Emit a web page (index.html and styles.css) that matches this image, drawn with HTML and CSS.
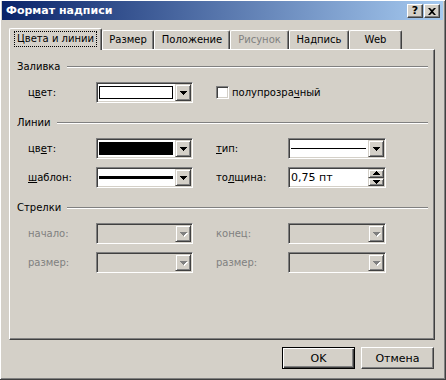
FILE: index.html
```html
<!DOCTYPE html>
<html lang="ru">
<head>
  <meta charset="UTF-8">
  <title>Формат надписи</title>
  <link rel="stylesheet" href="styles.css">
</head>
<body>
  <svg class="defs" width="0" height="0">
    <symbol id="down" viewBox="0 0 7 4"><path d="M0 0h7v1H0zM1 1h5v1H1zM2 2h3v1H2zM3 3h1v1H3z"/></symbol>
    <symbol id="up" viewBox="0 0 7 4"><path d="M3 0h1v1H3zM2 1h3v1H2zM1 2h5v1H1zM0 3h7v1H0z"/></symbol>
  </svg>

  <div class="window">
    <div class="titlebar">
      <span class="title">Формат надписи</span>
      <div class="caption-buttons">
        <span class="caption-btn help">?</span>
        <span class="caption-btn">
          <svg width="8" height="7" viewBox="0 0 8 7"><path d="M0 0h2l2 2 2-2h2L5 3.5 8 7H6L4 5 2 7H0l3-3.5z"/></svg>
        </span>
      </div>
    </div>

    <div class="client">
      <div class="tabs">
        <div class="tab active"><span class="focus">Цвета и линии</span></div>
        <div class="tab tab-size">Размер</div>
        <div class="tab tab-pos">Положение</div>
        <div class="tab tab-pic disabled">Рисунок</div>
        <div class="tab tab-box">Надпись</div>
        <div class="tab tab-web">Web</div>
      </div>

      <div class="panel">
        <div class="group-title"><span>Заливка</span><i class="etch"></i></div>
        <div class="row">
          <span class="lbl">ц<u>в</u>ет:</span>
          <div class="combo">
            <div class="field"><span class="swatch"></span></div>
            <span class="drop"><svg class="arr"><use href="#down"/></svg></span>
          </div>
          <label class="check">
            <span class="box"></span>
            полупрозра<u>ч</u>ный
          </label>
        </div>

        <div class="group-title"><span>Линии</span><i class="etch"></i></div>
        <div class="row">
          <span class="lbl">цв<u>е</u>т:</span>
          <div class="combo">
            <div class="field"><span class="swatch black"></span></div>
            <span class="drop"><svg class="arr"><use href="#down"/></svg></span>
          </div>
          <span class="lbl right"><u>т</u>ип:</span>
          <div class="combo wide">
            <div class="field"><span class="line thin"></span></div>
            <span class="drop"><svg class="arr"><use href="#down"/></svg></span>
          </div>
        </div>
        <div class="row">
          <span class="lbl"><u>ш</u>аблон:</span>
          <div class="combo">
            <div class="field"><span class="line thick"></span></div>
            <span class="drop"><svg class="arr"><use href="#down"/></svg></span>
          </div>
          <span class="lbl right">то<u>л</u>щина:</span>
          <div class="combo wide spin">
            <div class="field text">0,75 пт</div>
            <div class="spin-btns">
              <span class="drop"><svg class="arr"><use href="#up"/></svg></span>
              <span class="drop"><svg class="arr"><use href="#down"/></svg></span>
            </div>
          </div>
        </div>

        <div class="group-title"><span>Стрелки</span><i class="etch"></i></div>
        <div class="row disabled">
          <span class="lbl">начало:</span>
          <div class="combo">
            <div class="field"></div>
            <span class="drop"><svg class="arr"><use href="#down"/></svg></span>
          </div>
          <span class="lbl right">конец:</span>
          <div class="combo wide">
            <div class="field"></div>
            <span class="drop"><svg class="arr"><use href="#down"/></svg></span>
          </div>
        </div>
        <div class="row disabled">
          <span class="lbl">размер:</span>
          <div class="combo">
            <div class="field"></div>
            <span class="drop"><svg class="arr"><use href="#down"/></svg></span>
          </div>
          <span class="lbl right">размер:</span>
          <div class="combo wide">
            <div class="field"></div>
            <span class="drop"><svg class="arr"><use href="#down"/></svg></span>
          </div>
        </div>
      </div>

      <div class="dialog-buttons">
        <button class="btn default">OK</button>
        <button class="btn">Отмена</button>
      </div>
    </div>
  </div>
</body>
</html>
```

FILE: styles.css
```css
body {
  margin: 0;
  background: #d4d0c8;
  font-family: "DejaVu Sans", Verdana, sans-serif;
  font-size: 10px;
  color: #000;
}
.defs {
  position: absolute;
}
.window {
  width: 446px;
  height: 380px;
  box-sizing: border-box;
  padding: 1px 3px 3px 2px;
  display: flex;
  flex-direction: column;
  box-shadow: inset -1px -1px #404040, inset 1px 1px #fff, inset -2px -2px #808080;
}

/* title bar */
.titlebar {
  height: 19px;
  display: flex;
  align-items: center;
  justify-content: space-between;
  padding: 0 3px 0 4px;
  background: linear-gradient(to right, #0a246a, #a6caf0);
}
.title {
  color: #fff;
  font-weight: bold;
  font-size: 11px;
}
.caption-buttons {
  display: flex;
  gap: 1px;
  margin-top: 1px;
}
.caption-btn {
  width: 16px;
  height: 14px;
  box-sizing: border-box;
  display: flex;
  align-items: center;
  justify-content: center;
  background: #d4d0c8;
  border: 1px solid;
  border-color: #fff #404040 #404040 #fff;
  box-shadow: inset -1px -1px #808080;
}
.caption-btn.help {
  font-weight: bold;
  font-size: 11px;
  line-height: 12px;
}

/* client area */
.client {
  flex: 1;
  padding: 8px 8px 0 7px;
}
.tabs {
  display: flex;
  align-items: flex-end;
  height: 21px;
}
.tab {
  height: 19px;
  box-sizing: border-box;
  border: 1px solid;
  border-bottom: none;
  border-color: #fff #404040 #fff #fff;
  border-radius: 2px 2px 0 0;
  box-shadow: inset -1px 0 #808080;
  text-align: center;
  line-height: 17px;
}
.tab.active {
  width: 93px;
  height: 22px;
  margin-bottom: -1px;
  position: relative;
  z-index: 1;
  background: #d4d0c8;
  padding-top: 3px;
  line-height: 14px;
}
.tab.active .focus {
  display: inline-block;
  padding: 0 2px;
  outline: 1px dotted #000;
}
.tab-size { width: 52px; }
.tab-pos { width: 76px; }
.tab-pic { width: 59px; }
.tab-box { width: 60px; }
.tab-web { width: 53px; }
.tab.disabled {
  color: #808080;
}

.panel {
  height: 291px;
  box-sizing: border-box;
  border: 1px solid;
  border-color: #fff #404040 #404040 #fff;
  box-shadow: inset -1px -1px #808080;
  padding: 10px 6px 0 7px;
}

.group-title {
  display: flex;
  align-items: center;
  height: 13px;
  line-height: 13px;
  margin-bottom: 9px;
}
.group-title + .row {
  margin-top: 0;
}
.etch {
  flex: 1;
  margin-left: 6px;
  border-top: 1px solid #808080;
  border-bottom: 1px solid #fff;
}
.row {
  display: flex;
  align-items: center;
  height: 21px;
  padding-left: 11px;
}
.row + .row {
  margin-top: 8px;
}
.row + .group-title {
  margin-top: 13px;
}
.lbl {
  width: 68px;
}
.lbl.right {
  width: 72px;
  margin-left: 23px;
}
.disabled .lbl {
  color: #808080;
}

/* combo boxes */
.combo {
  width: 97px;
  height: 21px;
  box-sizing: border-box;
  display: flex;
  padding: 1px;
  border: 1px solid;
  border-color: #808080 #fff #fff #808080;
  box-shadow: inset 1px 1px #404040, inset -1px -1px #d4d0c8;
  background: #fff;
}
.combo.wide {
  width: 98px;
}
.field {
  flex: 1;
  display: flex;
  align-items: center;
  padding: 2px 2px 2px 1px;
}
.disabled .combo {
  background: #d4d0c8;
}
.swatch {
  flex: 1;
  align-self: stretch;
  border: 1px solid #000;
  background: #fff;
}
.swatch.black {
  background: #000;
}
.line {
  flex: 1;
  background: #000;
}
.line.thin {
  height: 1px;
}
.line.thick {
  height: 3px;
}
.field.text {
  padding: 0 1px;
  font-size: 11px;
}
.drop {
  width: 16px;
  height: 17px;
  box-sizing: border-box;
  display: flex;
  align-items: center;
  justify-content: center;
  background: #d4d0c8;
  border: 1px solid;
  border-color: #d4d0c8 #404040 #404040 #d4d0c8;
  box-shadow: inset 1px 1px #fff, inset -1px -1px #808080;
}
.arr {
  width: 7px;
  height: 4px;
  fill: #000;
}
.disabled .arr {
  fill: #808080;
  filter: drop-shadow(1px 1px 0 #fff);
}
.spin-btns {
  display: flex;
  flex-direction: column;
}
.spin-btns .drop {
  height: 8.5px;
}

/* check box */
.check {
  display: flex;
  align-items: center;
  margin-left: 23px;
}
.check .box {
  width: 13px;
  height: 13px;
  box-sizing: border-box;
  margin-right: 3px;
  background: #fff;
  border: 1px solid;
  border-color: #808080 #fff #fff #808080;
  box-shadow: inset 1px 1px #404040, inset -1px -1px #d4d0c8;
}

/* OK / Cancel */
.dialog-buttons {
  display: flex;
  justify-content: flex-end;
  gap: 6px;
  margin-top: 7px;
  padding-right: 1px;
}
.btn {
  width: 73px;
  height: 22px;
  font-family: inherit;
  font-size: 11px;
  background: #d4d0c8;
  border: 1px solid;
  border-color: #fff #404040 #404040 #fff;
  box-shadow: inset -1px -1px #808080;
  padding: 0;
}
.btn.default {
  border-color: #000;
  box-shadow: inset 1px 1px #fff, inset -1px -1px #404040, inset -2px -2px #808080;
}
```
